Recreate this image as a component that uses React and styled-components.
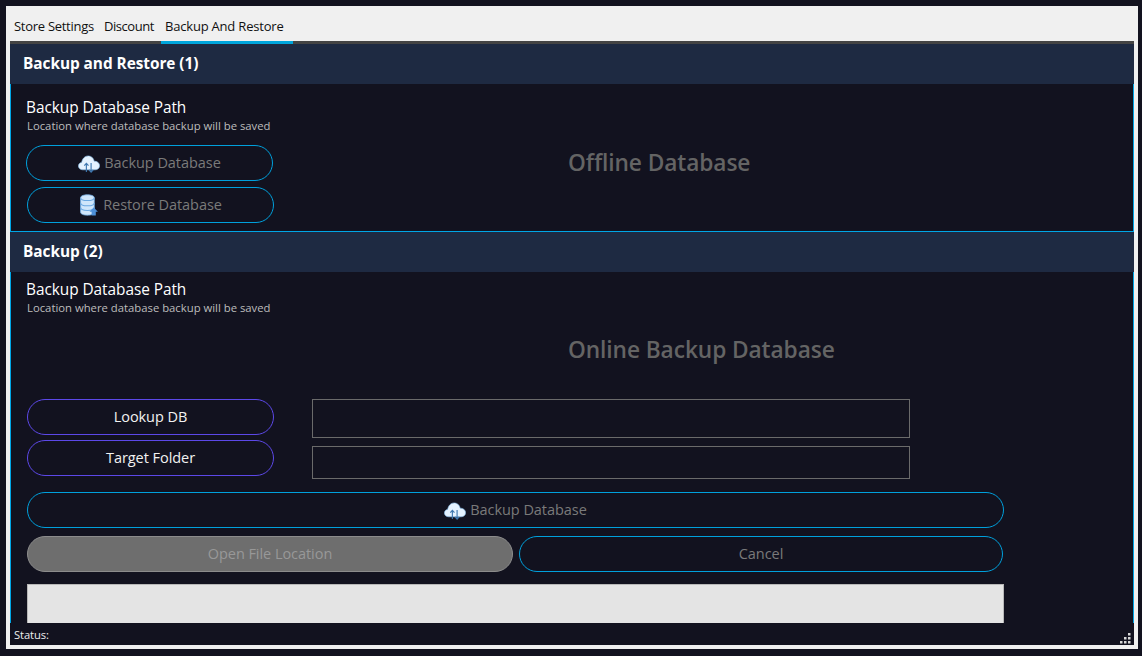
import React from 'react';
import styled, { createGlobalStyle } from 'styled-components';

const Global = createGlobalStyle`
  html, body { margin: 0; padding: 0; background: #12121f; height: 100%; overflow: hidden; }
  * { box-sizing: border-box; }
`;
const FONT = `"Open Sans", "Noto Sans", "Liberation Sans", sans-serif`;

const Screen = styled.div`
  width: 1142px; height: 656px; padding: 6px 4px 7px 6px; background: #12121f; font-family: ${FONT};
`;
const Window = styled.div`
  width: 1132px; height: 643px; background: #f0f0f0; display: flex; flex-direction: column; padding: 0 4px 4px 4px;
`;
const TabBar = styled.div`
  height: 35px; display: flex; align-items: stretch; flex: none; margin-left: -4px;
`;
const Tab = styled.div`
  width: ${p => p.$w}px; padding-left: ${p => p.$pl}px; padding-top: 11px;
  font-size: 13px; line-height: 18px; color: #111; white-space: nowrap; letter-spacing: ${p => p.$ls}px;
`;
const Main = styled.div`
  flex: 1; background: #12121f; display: flex; flex-direction: column; min-height: 0; position: relative;
  border-top: 3px solid #444;
`;
const ActiveLine = styled.div`
  position: absolute; left: 151px; top: -3px; width: 132px; height: 3px; background: #00a6dc;
`;
const SectionHead = styled.div`
  height: 40px; flex: none; background: #1e2a42; color: #fff; font-weight: 700; font-size: 15.4px; line-height: 39px; padding-left: 13px; letter-spacing: -0.05px;
`;
const Panel = styled.div`
  flex: ${p => (p.$grow ? 1 : 'none')}; height: ${p => p.$h}px; min-height: 0; overflow: hidden;
  border-left: 1px solid #00a6e6; border-right: 1px solid #00a6e6;
  border-bottom: ${p => (p.$bottom ? '1px solid #00a6e6' : 'none')};
  padding: ${p => p.$pt}px 0 0 15px; display: flex; flex-direction: column;
`;
const Title = styled.div`
  color: #fff; font-size: 15.4px; line-height: 20px; letter-spacing: -0.05px; font-weight: 500;
`;
const Sub = styled.div`
  color: #bdbdbd; font-size: 11.3px; line-height: 14px; margin: 1px 0 0 1px;
`;
const Row = styled.div`
  display: flex; align-items: ${p => p.$top ? 'flex-start' : 'center'}; margin-top: ${p => p.$mt || 0}px;
  height: ${p => p.$h ? `${p.$h}px` : 'auto'}; flex: none;
`;
const Pill = styled.div`
  width: ${p => p.$w}px; height: 36px; flex: none; border-radius: 18px;
  border: 1px solid ${p => p.$c || '#00a0dc'}; background: ${p => p.$fill || 'transparent'};
  margin-left: ${p => p.$ml || 0}px; margin-top: ${p => p.$mt || 0}px;
  color: ${p => p.$tc || '#7a7a7a'}; font-size: 14.5px; display: flex; align-items: center; justify-content: center; gap: 4px;
  letter-spacing: -0.05px; line-height: 20px;
`;
const Heading = styled.div`
  color: #646464; font-size: 22.7px; font-weight: 600; line-height: 30px; letter-spacing: -0.08px;
  margin: ${p => p.$m};
`;
const Input = styled.div`
  width: 598px; height: ${p => p.$h}px; border: 1px solid #6a6a6a; margin-left: 38px; margin-top: ${p => p.$mt || 0}px; flex: none;
`;
const Log = styled.div`
  width: 977px; height: 60px; flex: none; margin: 12px 0 0 1px; background: #e4e4e4; border: 1px solid #b8b8b8; border-bottom: 0;
`;
const StatusBar = styled.div`
  height: 22px; flex: none; color: #eee; font-size: 11.200px; line-height: 23px; padding-left: 4px; position: relative; letter-spacing: -0.1px;
`;
const Grip = styled.svg`
  position: absolute; right: 1px; bottom: 1px;
`;

const CloudIcon = () => (
  <svg width="22" height="19" viewBox="0 0 21 18">
    <path d="M4.500 15C2 15 .3 13.300.4 11.200c.1-1.700 1.400-3 3.100-3.200C4 5 6 1.800 9.800 1.800c3 0 5.200 2.200 5.600 5 2.800-.2 5.200 1.700 5.200 4.300 0 2.300-1.900 3.900-4.200 3.900z" fill="#e4f2ff" stroke="#8fc4f0" strokeWidth=".6"/>
    <path d="M8 17V9M6 11l2-2.200L10 11M12.500 8.500V17M10.500 15l2 2.200 2-2.200" fill="none" stroke="#3f78b0" strokeWidth="1.100"/>
  </svg>
);
const DbIcon = () => (
  <svg width="20" height="22" viewBox="0 0 19 21">
    <path d="M1.500 3.500C1.500 1.800 4.500.8 8 .8s6.500 1 6.500 2.700v14c0 1.700-3 2.700-6.500 2.700s-6.500-1-6.500-2.700z" fill="#cfe6fb" stroke="#79b4ea" strokeWidth=".8"/>
    <path d="M1.500 3.500c0 1.700 3 2.700 6.500 2.700s6.500-1 6.500-2.700M1.500 8.500c0 1.700 3 2.700 6.500 2.700s6.500-1 6.500-2.700M1.500 13c0 1.700 3 2.700 6.500 2.700s6.500-1 6.500-2.700" fill="none" stroke="#6aa8e2" strokeWidth="1"/>
    <path d="M14 13l4 4h-2v3.500h-4V17h-2z" fill="#4d90d8"/>
  </svg>
);

const PURPLE = '#5c48e8';

export default function App() {
  return (
    <Screen>
      <Global />
      <Window>
        <TabBar>
          <Tab $w={98} $pl={8} $ls={-0.28}>Store Settings</Tab>
          <Tab $w={57} $pl={0} $ls={-0.45}>Discount</Tab>
          <Tab $w={132} $pl={4} $ls={-0.2}>Backup And Restore</Tab>
        </TabBar>
        <Main>
          <ActiveLine />
          <SectionHead>Backup and Restore (1)</SectionHead>
          <Panel $h={148} $bottom $pt={14}>
            <Title>Backup Database Path</Title>
            <Sub>Location where database backup will be saved</Sub>
            <Row $mt={12}>
              <Pill $w={247}><CloudIcon />Backup Database</Pill>
              <Heading $m="0 0 0 295px">Offline Database</Heading>
            </Row>
            <Pill $w={247} $ml={1} $mt={6}><DbIcon />Restore Database</Pill>
          </Panel>
          <SectionHead>Backup (2)</SectionHead>
          <Panel $grow $pt={8}>
            <Title>Backup Database Path</Title>
            <Sub>Location where database backup will be saved</Sub>
            <Heading $m="20px 0 0 542px">Online Backup Database</Heading>
            <Row $top $mt={34}>
              <Pill $w={247} $ml={1} $c={PURPLE} $tc="#f2f2f2">Lookup DB</Pill>
              <Input $h={39} />
            </Row>
            <Row $top $mt={2} $h={39}>
              <Pill $w={247} $ml={1} $c={PURPLE} $tc="#f2f2f2">Target Folder</Pill>
              <Input $h={33} $mt={6} />
            </Row>
            <Pill $w={977} $ml={1} $mt={13}><CloudIcon />Backup Database</Pill>
            <Row $mt={8}>
              <Pill $w={486} $ml={1} $fill="#6e6e6e" $c="#8c8c8c" $tc="#989898">Open File Location</Pill>
              <Pill $w={484} $ml={6}>Cancel</Pill>
            </Row>
            <Log />
          </Panel>
          <StatusBar>
            Status:
            <Grip width="13" height="11" viewBox="0 0 13 11" fill="#d8d8d8">
              <rect x="8" y="0" width="2.500" height="2.500"/>
              <rect x="4" y="4" width="2.500" height="2.500"/><rect x="8" y="4" width="2.500" height="2.500"/>
              <rect x="0" y="8" width="2.500" height="2.500"/><rect x="4" y="8" width="2.500" height="2.500"/><rect x="8" y="8" width="2.500" height="2.500"/>
            </Grip>
          </StatusBar>
        </Main>
      </Window>
    </Screen>
  );
}
